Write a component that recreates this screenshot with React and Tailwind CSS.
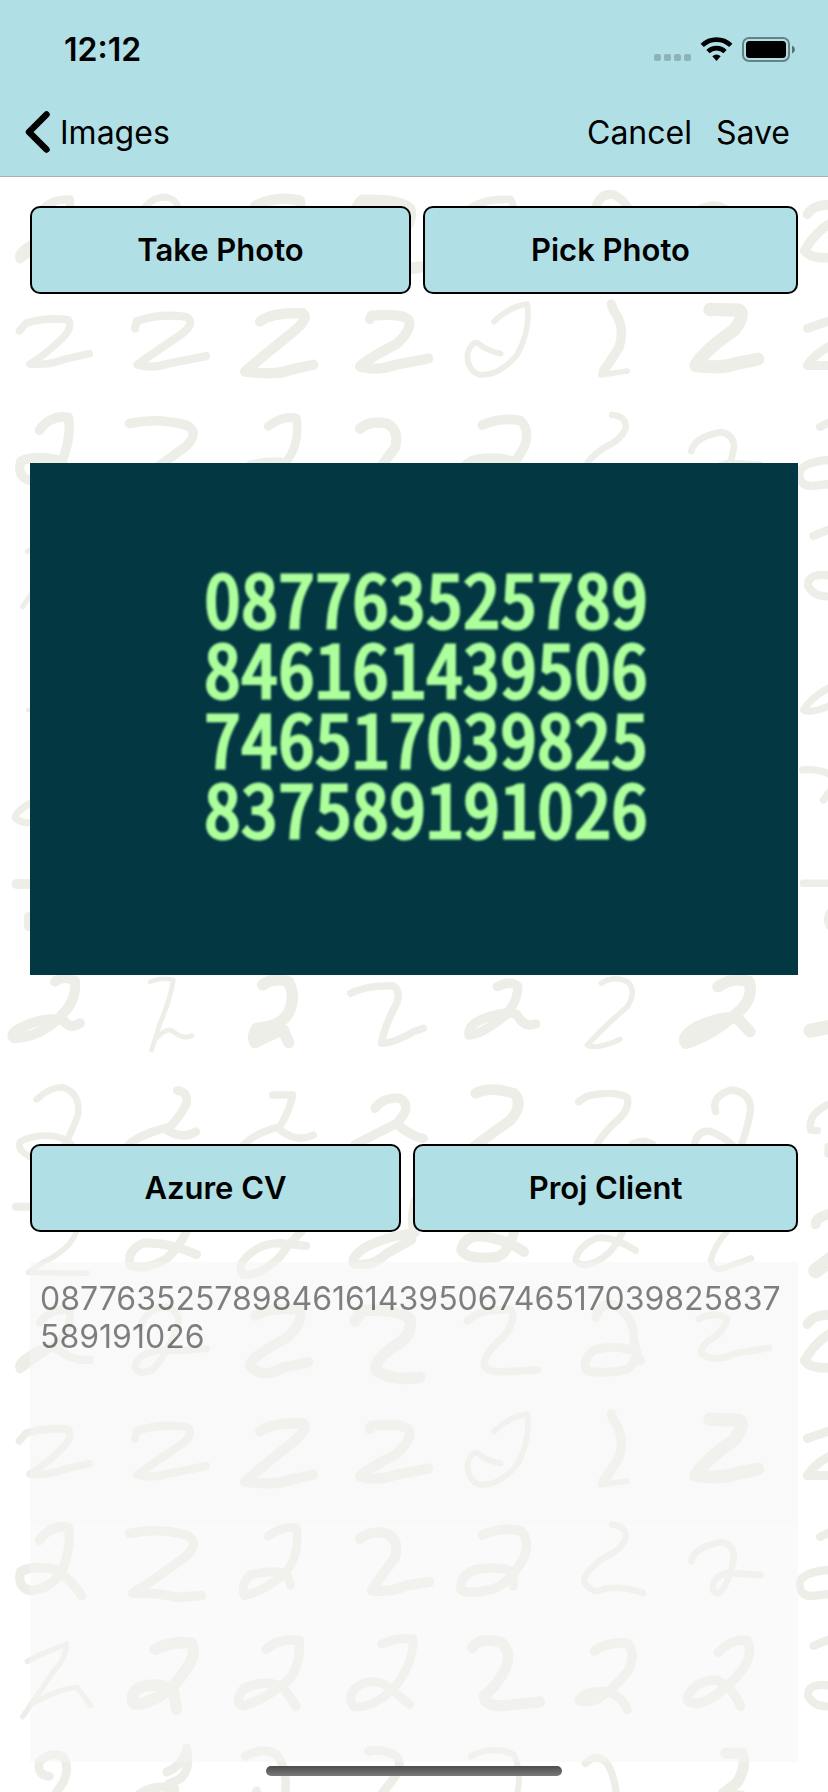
import React from "react";

// Handwritten strokes of the wallpaper: [stroke width, path]. Units are about a third of a pixel.
const REPEATED_LEFT = [
  [24, "M120 210Q150 168 210 172Q215 230 170 270Q110 310 60 345Q50 330 80 310Q140 270 180 290Q210 320 270 318"],
  [20, "M420 225Q440 165 500 165Q550 180 530 230Q500 300 460 345Q420 365 405 340Q410 300 480 290Q530 295 620 285"],
  [30, "M765 190Q830 160 900 175Q910 220 850 260Q750 310 750 335Q790 375 850 340L925 325"],
  [34, "M1065 205L1085 175Q1200 170 1230 200Q1240 250 1180 280Q1120 320 1130 350Q1180 380 1260 368"],
  [22, "M58 552L78 530Q140 512 205 520Q220 545 180 580Q130 625 90 648Q150 652 190 635L268 618"],
  [24, "M405 545L410 524Q480 500 560 512Q590 530 540 565Q440 630 412 650Q460 662 500 648L618 625"],
  [30, "M780 525Q820 497 910 502Q930 520 860 570Q770 640 735 670Q830 682 870 665L940 650"],
  [30, "M1110 518L1115 508Q1210 500 1225 520Q1240 545 1190 590Q1100 635 1080 655Q1130 670 1190 650L1285 632"],
  [28, "M118 840Q150 795 205 802Q215 850 190 920Q160 980 90 985Q50 975 62 930Q100 910 170 925Q220 960 245 1000"],
  [28, "M388 820Q470 802 560 825Q600 845 560 885Q470 950 398 993Q470 990 530 1005L605 1000"],
  [26, "M805 828Q850 795 890 805Q900 880 860 930Q800 985 733 1000Q720 970 750 940Q820 925 860 935L872 970"],
  [30, "M1080 835Q1110 810 1160 820Q1200 840 1185 890Q1130 960 1115 985Q1180 990 1220 970L1288 960"],
  [16, "M82 1190Q140 1160 200 1140Q200 1180 160 1220Q110 1290 68 1350M100 1310Q180 1270 230 1265Q255 1295 272 1318"],
  [34, "M465 1155Q520 1130 575 1138Q590 1170 560 1210Q530 1260 480 1290Q410 1325 398 1308Q390 1270 440 1260Q500 1255 520 1275L530 1328"],
  [28, "M798 1155Q840 1120 898 1130Q905 1190 870 1240Q800 1300 730 1318Q700 1310 730 1270Q790 1240 850 1265L888 1320"],
  [26, "M1145 1140Q1190 1120 1240 1125Q1240 1200 1180 1270Q1110 1330 1060 1320Q1040 1290 1070 1265Q1110 1235 1160 1260L1230 1315"],
  [26, "M148 1522Q110 1520 118 1480Q150 1450 190 1465Q210 1500 190 1540L155 1590"],
  [26, "M500 1510Q550 1490 560 1440Q575 1500 540 1530L505 1545M410 1580Q460 1540 525 1560L520 1590"],
  [26, "M735 1465Q790 1435 830 1460Q865 1500 855 1580M770 1565L778 1590"],
  [26, "M1105 1450Q1150 1440 1190 1465Q1210 1490 1180 1530L1140 1580"],
  [16, "M230 -55Q210 0 130 35L85 65L262 67"],
  [26, "M560 -55Q540 -10 500 25Q440 60 390 45Q380 0 430 -20Q500 -25 590 13"],
  [24, "M905 -55Q860 -10 840 20Q780 75 730 72Q710 50 740 20Q780 -20 840 -20L918 -12"],
  [28, "M1245 -140Q1230 -80 1245 -50Q1160 -40 1100 -10Q1050 20 1062 40Q1120 50 1160 10L1235 -30"],
];

const REPEATED_RIGHT = [
  [22, "M160 205Q200 168 290 172Q310 200 270 250Q210 300 210 330Q220 355 270 352L370 347"],
  [26, "M545 195Q560 150 600 158Q660 190 660 260Q670 310 680 320M670 295Q600 270 540 290Q500 320 520 350Q580 360 640 345Q660 330 670 300"],
  [20, "M855 200Q900 175 940 200Q930 240 880 265Q850 290 870 305Q910 325 960 300L1065 283"],
  [28, "M1180 215Q1200 185 1250 188M1250 240Q1200 270 1172 320Q1190 345 1250 340"],
  [17, "M240 525Q290 480 340 475Q350 550 310 620Q260 680 200 680Q160 670 160 620Q175 575 195 590Q220 610 260 618"],
  [28, "M592 475L600 495Q635 540 615 600Q590 640 568 668"],
  [16, "M560 680L640 668"],
  [38, "M887 490L975 492Q995 505 960 550Q870 610 845 652Q920 662 960 648L1032 634"],
  [26, "M1180 545L1250 522M1250 595Q1200 620 1180 652L1250 652"],
  [28, "M205 825Q260 800 320 812Q350 840 330 890Q290 960 240 980Q150 1000 140 980Q140 930 200 922Q260 915 295 930L298 972"],
  [19, "M594 795Q640 800 635 835Q620 870 570 890Q510 930 510 960Q540 1000 570 980Q620 970 688 992"],
  [20, "M832 900Q840 860 920 845Q960 850 960 890Q950 950 920 990Q890 1000 900 960Q920 930 960 935L1040 940"],
  [24, "M1218 830L1250 815M1250 925Q1170 930 1157 960Q1155 1005 1200 1000L1250 995"],
  [32, "M175 1150Q200 1118 260 1135Q295 1160 275 1210Q250 1260 210 1290Q210 1320 270 1318L378 1307"],
  [28, "M540 1160Q590 1130 640 1138Q670 1170 640 1220Q600 1270 550 1300Q500 1312 495 1302Q520 1270 590 1280Q630 1300 640 1330"],
  [28, "M912 1165Q960 1120 1000 1130Q1020 1170 980 1220Q920 1290 860 1310Q810 1315 822 1290Q850 1240 910 1245Q960 1270 980 1320"],
  [24, "M1198 1145L1250 1125M1250 1260Q1180 1250 1182 1290Q1200 1320 1235 1320"],
  [18, "M170 1465Q240 1430 300 1460Q325 1510 308 1580"],
  [22, "M514 1485Q545 1455 575 1480Q600 1510 608 1580"],
  [32, "M935 1456L985 1456Q1000 1490 970 1540L925 1575L985 1580"],
  [30, "M300 -50Q280 10 250 20Q160 30 142 0Q150 -40 200 -40Q280 -30 330 5"],
  [20, "M625 -50Q600 0 570 20Q510 60 485 30Q490 -10 550 -35Q600 -40 665 2"],
  [18, "M940 -55Q900 -10 890 30Q900 65 930 52L1012 24"],
  [30, "M1250 -105Q1205 -95 1205 -75"],
  [44, "M1205 60L1260 20"],
];

const MIDDLE_LEFT = [
  [30, "M165 65Q190 45 225 62Q230 120 190 160Q130 230 42 235Q25 220 70 200Q130 170 190 180Q210 210 240 190"],
  [14, "M450 66Q480 50 520 60Q510 120 480 190L455 270M470 235Q500 200 520 215Q550 240 576 227"],
  [34, "M788 75Q820 50 865 65Q890 110 865 160Q840 200 770 205Q755 230 765 248Q820 220 850 210L866 248"],
  [22, "M1052 100Q1100 75 1180 78Q1210 100 1180 150Q1150 210 1145 250Q1180 250 1242 215L1270 205"],
  [20, "M110 418Q150 380 190 382Q240 400 235 460Q220 510 190 560M90 590Q50 570 60 545Q110 520 170 530Q210 540 220 560"],
  [26, "M532 392Q565 395 560 430Q540 470 510 500Q400 530 383 560M500 510Q550 540 588 515"],
  [22, "M818 405L878 405Q870 450 840 500Q760 520 725 560M840 510Q890 550 940 525"],
  [28, "M1125 445Q1150 410 1200 415Q1240 440 1190 490Q1130 520 1065 555M1200 500Q1240 530 1270 535"],
  [24, "M48 740L100 740"],
];

const MIDDLE_RIGHT = [
  [28, "M250 80Q290 60 312 80Q310 130 270 170Q200 225 165 225Q160 195 210 175Q280 150 310 165Q330 205 365 192"],
  [16, "M562 70Q600 45 640 65Q670 90 640 140Q570 200 520 255Q550 270 618 238"],
  [34, "M912 80Q960 48 1005 65Q1020 110 980 150Q890 230 815 250Q800 230 850 200Q930 165 970 175L1008 215"],
  [42, "M1190 212L1250 200"],
  [32, "M185 400Q230 378 300 400Q330 430 290 480Q220 530 180 560"],
  [22, "M494 425L520 408Q600 390 640 412Q650 450 600 490Q560 530 545 560M655 552Q690 535 715 552"],
  [22, "M905 455Q890 410 950 390Q1010 395 1010 450Q1000 510 980 560M842 552Q850 510 890 514Q930 530 955 555"],
  [22, "M1250 430Q1180 460 1190 510L1210 512M1242 560L1242 582"],
];

const EDGE_LEFT = [
  [14, "M84 750H100"],
  [22, "M90 1030Q40 1060 47 1075Q70 1095 100 1085"],
  [30, "M50 1272H100"],
  [28, "M86 1370V1400"],
];

const EDGE_RIGHT = [
  [22, "M190 680Q130 710 107 750Q130 762 190 735"],
  [22, "M104 930Q150 925 190 945M190 990L166 1020M106 1270H190"],
  [16, "M186 1350Q166 1380 186 1405"],
];

function Strokes({ x, y, scaleY = 0.3333, items }) {
  return (
    <g transform={`translate(${x} ${y}) scale(0.3333 ${scaleY})`}>
      {items.map(([width, d]) => (
        <path key={d} d={d} strokeWidth={width} />
      ))}
    </g>
  );
}

function Wallpaper() {
  return (
    <svg
      aria-hidden="true"
      viewBox="0 0 828 1792"
      preserveAspectRatio="xMidYMin slice"
      className="absolute inset-0 h-full w-full"
      fill="none"
      stroke="#edeee7"
      strokeLinecap="round"
      strokeLinejoin="round"
    >
      {[140, 1250].map((y) => (
        <React.Fragment key={y}>
          <Strokes x={0} y={y} scaleY={0.3457} items={REPEATED_LEFT} />
          <Strokes x={414} y={y} scaleY={0.3457} items={REPEATED_RIGHT} />
        </React.Fragment>
      ))}
      <Strokes x={0} y={960} items={MIDDLE_LEFT} />
      <Strokes x={414} y={960} items={MIDDLE_RIGHT} />
      <Strokes x={0} y={460} items={EDGE_LEFT} />
      <Strokes x={768} y={460} items={EDGE_RIGHT} />
    </svg>
  );
}

function StatusIcons() {
  return (
    <svg aria-hidden="true" width="142" height="26" viewBox="0 0 142 26">
      <g fill="#000" fillOpacity="0.2">
        <rect x="0" y="17" width="7" height="7" rx="2" />
        <rect x="10" y="17" width="7" height="7" rx="2" />
        <rect x="20" y="17" width="7" height="7" rx="2" />
        <rect x="30" y="17" width="7" height="7" rx="2" />
      </g>
      <g fill="none" stroke="#000" strokeWidth="4.6">
        <path d="M48.2 8.4A20.5 20.5 0 0 1 76.800 8.400" />
        <path d="M54 14.600A12.200 12.200 0 0 1 71 14.600" />
      </g>
      <path d="M58.300 19.300A6.500 6.500 0 0 1 66.700 19.300L62.500 24Z" fill="#000" />
      <rect x="89" y="1" width="46" height="23" rx="6" fill="none" stroke="#000" strokeOpacity="0.42" strokeWidth="2" />
      <rect x="92" y="4" width="40" height="17" rx="3.500" fill="#000" />
      <path d="M138 8.500Q141 10 141 12.500T138 16.500Z" fill="#000" fillOpacity="0.5" />
    </svg>
  );
}

const BUTTON =
  "h-22 rounded-[10px] border-2 border-black bg-[#b0e0e6] text-center text-[31px] font-semibold text-black";

const SCAN_LINES = ["087763525789", "846161439506", "746517039825", "837589191026"];

export default function App() {
  return (
    <div className="relative flex min-h-screen flex-col overflow-hidden bg-white font-['Inter','Liberation_Sans',sans-serif] text-black">
      <Wallpaper />

      <header className="relative border-b border-[#a9b0b0] bg-[#b0e0e6]">
        <div className="flex h-[100px] items-center justify-between pr-8 pl-16">
          <span className="text-[32px] leading-10 font-semibold">12:12</span>
          <StatusIcons />
        </div>
        <nav className="flex h-[76px] items-start justify-between pt-[11px] pr-[38px] pl-6 text-[32px] leading-11">
          <a href="#images" className="flex items-center gap-2">
            <svg aria-hidden="true" width="28" height="44" viewBox="0 0 28 44" fill="none" stroke="#000" strokeWidth="6.500" strokeLinecap="round" strokeLinejoin="round">
              <path d="M22.500 3.500L5 21L22.500 38.500" />
            </svg>
            <span>Images</span>
          </a>
          <div className="flex gap-6">
            <button type="button">Cancel</button>
            <button type="button">Save</button>
          </div>
        </nav>
      </header>

      <main className="relative flex flex-1 flex-col px-[30px] pt-[29px] pb-[30px]">
        <div className="flex gap-3">
          <button type="button" className={`${BUTTON} flex-[381]`}>Take Photo</button>
          <button type="button" className={`${BUTTON} flex-[375]`}>Pick Photo</button>
        </div>

        <div className="flex flex-1 items-center">
          <div className="flex aspect-3/2 w-full flex-col items-center justify-center bg-[#033843] pb-9 pl-6 font-['Noto_Sans_CJK_JP',sans-serif] text-[74px] leading-[70px] font-normal text-[#adff9c] [-webkit-text-stroke:3px_#adff9c] [font-feature-settings:'hwid']">
            {SCAN_LINES.map((line) => (
              <p key={line} className="blur-[1px]">{line}</p>
            ))}
          </div>
        </div>

        <div className="flex gap-3">
          <button type="button" className={`${BUTTON} flex-[371]`}>Azure CV</button>
          <button type="button" className={`${BUTTON} flex-[385]`}>Proj Client</button>
        </div>

        <textarea
          aria-label="Recognized text"
          readOnly
          defaultValue={SCAN_LINES.join("")}
          className="mt-[30px] block h-[500px] w-full resize-none bg-[#f5f5f5] px-[10px] pt-[18px] text-[32px] leading-[38px] break-all text-black opacity-50 outline-none"
        />
      </main>

      <div className="absolute bottom-4 left-1/2 h-[10px] w-[296px] -translate-x-1/2 rounded-full bg-linear-to-b from-[#4c4c4c] to-[#7a7a7a]" />
    </div>
  );
}
